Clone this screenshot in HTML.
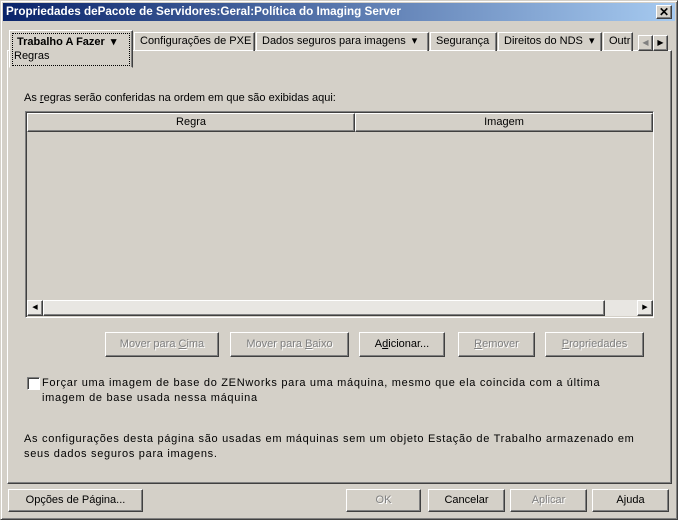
<!DOCTYPE html>
<html><head><meta charset="utf-8"><style>
*{margin:0;padding:0;box-sizing:border-box}
body{width:678px;height:520px;background:#d4d0c8;font-family:"Liberation Sans",sans-serif;font-size:11px;color:#000;position:relative;overflow:hidden}
.a{position:absolute;white-space:nowrap}
.outer{left:0;top:0;width:678px;height:520px;border:1px solid;border-color:#d4d0c8 #404040 #404040 #d4d0c8;box-shadow:inset 1px 1px #fff,inset -1px -1px #808080}
.title{left:3px;top:3px;width:672px;height:18px;background:linear-gradient(90deg,#0a246a,#a6caf0);color:#fff;font-weight:bold;font-size:11.7px;line-height:18px;padding-left:3px}
.raised{border:1px solid;border-color:#fff #404040 #404040 #fff;box-shadow:inset -1px -1px #808080}
.sunk{border:1px solid;border-color:#808080 #fff #fff #808080;box-shadow:inset 1px 1px #404040}
.btn{text-align:center;line-height:22px}
.dis{color:#808080;text-shadow:1px 1px #fff}
.tab{top:32px;height:19px;border:1px solid;border-color:#fff #404040 transparent #fff;border-bottom:none;line-height:17px;padding-left:5px;box-shadow:inset -1px 0 #808080}
.panel{left:7px;top:50px;width:665px;height:434px;border:1px solid;border-color:#fff #404040 #404040 #fff;box-shadow:inset -1px -1px #808080}
</style></head><body>
<div class="a outer"></div>
<div class="a title">Propriedades dePacote de Servidores:Geral:Política do Imaging Server</div>
<div class="a raised btn" style="left:656px;top:5px;width:16px;height:14px;line-height:12px;font-size:12px;font-weight:bold;background:#d4d0c8">✕</div>
<div class="a panel"></div>
<div class="a tab" style="left:134px;width:121px">Configurações de PXE</div>
<div class="a tab" style="left:256px;width:173px">Dados seguros para imagens &nbsp;▾</div>
<div class="a tab" style="left:430px;width:67px">Segurança</div>
<div class="a tab" style="left:498px;width:104px">Direitos do NDS &nbsp;▾</div>
<div class="a tab" style="left:603px;width:30px;overflow:hidden">Outr</div>
<div class="a" style="left:9px;top:30px;width:124px;height:38px;background:#d4d0c8;border:1px solid;border-color:#fff #404040 #d4d0c8 #fff;box-shadow:inset -1px 0 #808080"></div>
<div class="a" style="left:12px;top:33px;width:118px;height:33px;border:1px dotted #000"></div>
<div class="a" style="left:17px;top:35px;font-weight:bold">Trabalho A Fazer &nbsp;▾</div>
<div class="a" style="left:14px;top:50px">Regras</div>
<div class="a raised btn" style="left:638px;top:35px;width:15px;height:16px;line-height:14px;font-size:8px;color:#808080">◀</div>
<div class="a raised btn" style="left:653px;top:35px;width:15px;height:16px;line-height:14px;font-size:8px">▶</div>
<div class="a" style="left:24px;top:92px">As <u>r</u>egras serão conferidas na ordem em que são exibidas aqui:</div>
<div class="a sunk" style="left:25px;top:111px;width:629px;height:207px"></div>
<div class="a raised btn" style="left:27px;top:113px;width:328px;height:19px;line-height:17px">Regra</div>
<div class="a raised btn" style="left:355px;top:113px;width:298px;height:19px;line-height:17px">Imagem</div>
<div class="a" style="left:27px;top:300px;width:626px;height:16px;background:#e8e6e2"></div>
<div class="a raised btn" style="left:27px;top:300px;width:16px;height:16px;line-height:14px;font-size:7px">◀</div>
<div class="a raised" style="left:43px;top:300px;width:562px;height:16px"></div>
<div class="a raised btn" style="left:637px;top:300px;width:16px;height:16px;line-height:14px;font-size:7px">▶</div>
<div class="a raised btn dis" style="left:105px;top:332px;width:114px;height:25px">Mover para <u>C</u>ima</div>
<div class="a raised btn dis" style="left:230px;top:332px;width:119px;height:25px">Mover para <u>B</u>aixo</div>
<div class="a raised btn" style="left:359px;top:332px;width:86px;height:25px">A<u>d</u>icionar...</div>
<div class="a raised btn dis" style="left:458px;top:332px;width:77px;height:25px"><u>R</u>emover</div>
<div class="a raised btn dis" style="left:545px;top:332px;width:99px;height:25px"><u>P</u>ropriedades</div>
<div class="a sunk" style="left:27px;top:377px;width:13px;height:13px;background:#fff"></div>
<div class="a" style="left:42px;top:376px;line-height:15px;letter-spacing:0.7px">Forçar uma imagem de base do ZENworks para uma máquina, mesmo que ela coincida com a última<br>imagem de base usada nessa máquina</div>
<div class="a" style="left:24px;top:432px;line-height:15px;letter-spacing:0.7px">As configurações desta página são usadas em máquinas sem um objeto Estação de Trabalho armazenado em<br>seus dados seguros para imagens.</div>
<div class="a raised btn" style="left:8px;top:489px;width:135px;height:23px;line-height:21px">Opções de Pá<u>g</u>ina...</div>
<div class="a raised btn dis" style="left:346px;top:489px;width:75px;height:23px;line-height:21px">OK</div>
<div class="a raised btn" style="left:428px;top:489px;width:77px;height:23px;line-height:21px">Cancelar</div>
<div class="a raised btn dis" style="left:510px;top:489px;width:77px;height:23px;line-height:21px">Aplicar</div>
<div class="a raised btn" style="left:592px;top:489px;width:77px;height:23px;line-height:21px">Ajuda</div>
</body></html>
